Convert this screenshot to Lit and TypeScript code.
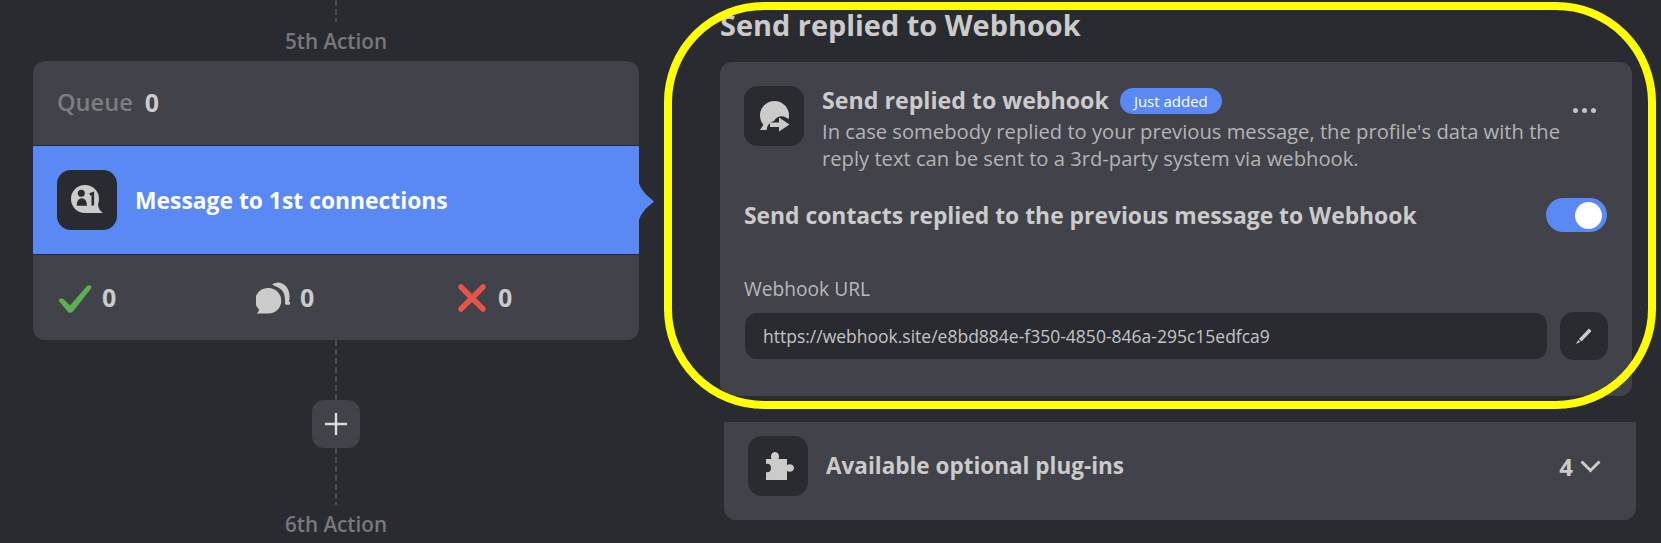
import { LitElement, html, css } from "lit";
import { customElement } from "lit/decorators.js";

@customElement("app-root")
export class AppRoot extends LitElement {
  static styles = css`
    :host { display: block; width: 1661px; height: 543px; overflow: hidden; position: relative; background: #2a2b30; font-family: "Open Sans", "Noto Sans", sans-serif; color: #cbcbcb; }
    svg { display: block; }
    .page { display: flex; align-items: flex-start; padding-left: 33px; }
    .flow { width: 606px; flex: none; display: flex; flex-direction: column; align-items: center; }
    .dash { width: 2px; background: repeating-linear-gradient(to bottom, #4a4b52 0 6px, transparent 6px 9px); }
    .d1 { height: 22px; }
    .d2 { height: 60px; }
    .d3 { height: 57px; }
    .step { height: 39px; box-sizing: border-box; padding-bottom: 2px; display: flex; align-items: center; font-size: 20.7px; font-weight: 600; color: #77787c; }
    .step.last { height: 38px; padding-bottom: 0; }
    .card { width: 606px; background: #41424a; border-radius: 12px; position: relative; }
    .queue { height: 84px; box-sizing: border-box; padding: 0 0 2px 24px; display: flex; align-items: center; gap: 12px; font-size: 23.6px; font-weight: 600; color: #7d7e82; }
    .queue b { color: #cbcbcb; font-weight: 700; font-size: 25px; }
    .active { height: 110px; box-sizing: border-box; background: #5a88f5; border-top: 1px solid #1f2748; border-bottom: 1px solid #1f2748; display: flex; align-items: center; padding-left: 24px; gap: 18px; color: #fff; font-size: 22.85px; font-weight: 700; position: relative; }
    .ico { width: 60px; height: 60px; flex: none; border-radius: 14px; background: #2a2b30; }
    .arrow { position: absolute; left: 100%; top: 37px; }
    .stats { height: 85px; display: grid; grid-template-columns: 198px 202px 1fr; align-items: center; padding-left: 25px; }
    .stat { display: flex; align-items: center; gap: 10px; font-size: 25px; font-weight: 700; }
    .stat span { padding-bottom: 2px; }
    .stat.mid { gap: 10px; }
    .stat.end { gap: 12px; }
    .plus { width: 48px; height: 48px; border-radius: 12px; background: #41424a; display: flex; align-items: center; justify-content: center; }
    .side { margin-left: 81px; width: 916px; flex: none; display: flex; flex-direction: column; }
    .h { height: 62px; box-sizing: border-box; padding-top: 5px; font-size: 28.9px; line-height: 40px; font-weight: 700; color: #cbcbcb; }
    .panel { width: 912px; box-sizing: border-box; height: 334px; background: #41424a; border-radius: 12px; padding: 24px 24px 36px 24px; display: flex; flex-direction: column; }
    .top { display: flex; gap: 18px; }
    .txt { width: 745px; flex: none; padding-top: 2px; }
    .ttl { display: flex; align-items: center; gap: 11px; height: 26px; font-size: 23.2px; font-weight: 700; }
    .ttl span:first-child { padding-bottom: 2px; }
    .badge { height: 26px; width: 102px; border-radius: 13px; background: #5a88f5; color: #fff; font-size: 15px; font-weight: 400; display: flex; align-items: center; justify-content: center; }
    .desc { margin-top: 4px; font-size: 20.2px; line-height: 27px; font-weight: 400; color: #b4b4b6; }
    .dots { display: flex; gap: 4px; margin-left: -12px; padding-top: 22px; }
    .dots i { width: 5px; height: 5px; border-radius: 50%; background: #c4c4c4; }
    .row { display: flex; justify-content: space-between; align-items: center; height: 34px; margin: 26px 1px 0 0; font-size: 22.85px; font-weight: 700; }
    .sw { width: 61px; height: 34px; box-sizing: border-box; border-radius: 17px; background: #5a88f5; display: flex; justify-content: flex-end; align-items: center; padding-right: 5px; }
    .sw i { width: 27px; height: 27px; border-radius: 50%; background: #fff; }
    .lbl { margin-top: 47px; height: 20px; line-height: 20px; font-size: 19.2px; font-weight: 400; color: #b9b9bb; }
    .url { margin-top: 13px; display: flex; align-items: center; gap: 13px; }
    .inp { width: 802px; margin-left: 1px; height: 46px; box-sizing: border-box; border-radius: 12px; background: #2a2b30; padding-left: 18px; display: flex; align-items: center; font-size: 17.5px; color: #c4c4c6; }
    .btn { width: 48px; height: 48px; flex: none; border-radius: 14px; background: #2a2b30; display: flex; align-items: center; justify-content: center; }
    .plug { margin: 26px 0 0 4px; width: 912px; height: 98px; box-sizing: border-box; background: #41424a; border-radius: 0 0 12px 12px; display: flex; align-items: flex-start; padding: 14px 35px 0 24px; gap: 18px; font-size: 22.5px; font-weight: 700; }
    .plug .nm { flex: 1; line-height: 60px; }
    .cnt { display: flex; align-items: center; gap: 7px; height: 60px; font-size: 24px; }
    .ring { position: absolute; left: 664px; top: 2px; width: 992px; height: 407px; box-sizing: border-box; border: 8px solid #ffff00; border-radius: 100px; pointer-events: none; }
  `;

  render() {
    return html`
      <div class="page">
        <div class="flow">
          <div class="dash d1"></div>
          <div class="step">5th Action</div>
          <div class="card">
            <div class="queue"><span>Queue</span><b>0</b></div>
            <div class="active">
              <div class="ico">
                <svg width="60" height="60" viewBox="0 0 60 60">
                  <circle cx="28" cy="29" r="14" fill="#cbcbcb"/>
                  <path fill="#cbcbcb" d="M41 33C41 38 43 41 46 43H28Z"/>
                  <circle cx="24.300" cy="23.300" r="3.500" fill="#2a2b30"/>
                  <path fill="#2a2b30" d="M19.700 35.700c0 -4.500 2 -7.500 5 -7.500s5.300 3 5.300 7.500z"/>
                  <path fill="none" stroke="#2a2b30" stroke-width="2.600" d="M32.800 24.500l3 -1.200v12.200"/>
                </svg>
              </div>
              <span>Message to 1st connections</span>
              <svg class="arrow" width="16" height="37" viewBox="0 0 16 37"><path fill="#5a88f5" d="M0 0c1 4 4 8 7 11.500l8 7l-8 7c-3 3.500 -6 7.500 -7 11.500z"/></svg>
            </div>
            <div class="stats">
              <div class="stat">
                <svg width="34" height="30" viewBox="0 0 34 30"><path fill="#5cb050" d="M0.500 17.500C1.500 15 4.500 15 6 16.500L12 22.500L29 3C31 1 34.500 3 33 5.500L15 28.500C14 30 11 30 10 29Z"/></svg>
                <span>0</span>
              </div>
              <div class="stat mid">
                <svg width="34" height="32" viewBox="0 0 34 32">
                  <path fill="#cbcbcb" d="M12.500 6a12.500 12.500 0 1 1 0 25.500h-12c1.500 -1 2.500 -2.500 2.500 -4a12.500 12.500 0 0 1 9.500 -21.500z"/>
                  <path fill="#cbcbcb" d="M16 2.500c3 -2.500 8 -3 12 0c5 3.500 6.500 10 5 17.500h1v2.500c-2 .5 -4 .5 -5 -.5c.5 -8 -1 -14 -7 -16.500z"/>
                </svg>
                <span>0</span>
              </div>
              <div class="stat end">
                <svg width="28" height="28" viewBox="0 0 28 28"><path fill="none" stroke="#e8544a" stroke-width="5.500" stroke-linecap="round" d="M3 3l22 22M25 3l-22 22"/></svg>
                <span>0</span>
              </div>
            </div>
          </div>
          <div class="dash d2"></div>
          <div class="plus">
            <svg width="22" height="22" viewBox="0 0 22 22"><path stroke="#dcdcdc" stroke-width="2.400" d="M11 0v22M0 11h22"/></svg>
          </div>
          <div class="dash d3"></div>
          <div class="step last">6th Action</div>
        </div>
        <div class="side">
          <div class="h">Send replied to Webhook</div>
          <div class="panel">
            <div class="top">
              <div class="ico">
                <svg width="60" height="60" viewBox="0 0 60 60">
                  <circle cx="30.500" cy="29.500" r="14.500" fill="#cbcbcb"/>
                  <path fill="#cbcbcb" d="M20 38L16 44H26Z"/>
                  <path fill="#2a2b30" d="M23 47C21.500 40 26 36 30 35C32 31 37 29 41 31L49 36V48H23Z"/>
                  <path fill="#cbcbcb" d="M26 36.500H35V31.500L45.500 38.500L35 45.500V41H26Z"/>
                </svg>
              </div>
              <div class="txt">
                <div class="ttl"><span>Send replied to webhook</span><span class="badge">Just added</span></div>
                <div class="desc">In case somebody replied to your previous message, the profile's data with the reply text can be sent to a 3rd-party system via webhook.</div>
              </div>
              <div class="dots"><i></i><i></i><i></i></div>
            </div>
            <div class="row"><span>Send contacts replied to the previous message to Webhook</span><div class="sw"><i></i></div></div>
            <div class="lbl">Webhook URL</div>
            <div class="url">
              <div class="inp">https://webhook.site/e8bd884e-f350-4850-846a-295c15edfca9</div>
              <div class="btn">
                <svg width="16" height="16" viewBox="0 0 16 16"><path fill="#cbcbcb" d="M13 0.500l2.500 2.500l-10 10.500l-2.500 -2.500z"/><path fill="#cbcbcb" d="M2.300 12l2 2l-4.300 2z"/></svg>
              </div>
            </div>
          </div>
          <div class="plug">
            <div class="ico">
              <svg width="60" height="60" viewBox="0 0 60 60"><path fill="#cbcbcb" d="M18 23h5.500c-1.500 -3 0 -7 3.500 -7s5 4 3.500 7h8.500v6c3 -1.500 7 -.5 7 3s-4 4.500 -7 3v9h-21v-8c3 1 5 -1 5 -4s-2 -5 -5 -4z"/></svg>
            </div>
            <span class="nm">Available optional plug-ins</span>
            <div class="cnt"><span>4</span>
              <svg width="21" height="13" viewBox="0 0 21 13"><path fill="none" stroke="#cbcbcb" stroke-width="3" d="M1.500 1.500l9 9l9 -9"/></svg>
            </div>
          </div>
        </div>
      </div>
      <div class="ring"></div>
    `;
  }
}
